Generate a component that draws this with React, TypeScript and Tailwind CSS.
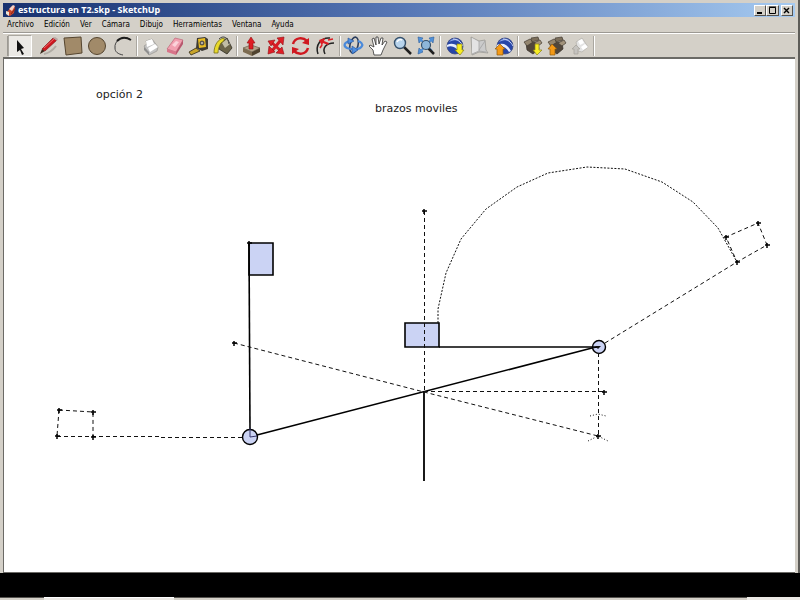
import React from 'react';

interface Tool {
  name: string;
  icon: React.ReactNode;
}

interface ToolGroup {
  id: string;
  spacing: string;
  tools: Tool[];
}

const MENUS = ['Archivo', 'Edición', 'Ver', 'Cámara', 'Dibujo', 'Herramientas', 'Ventana', 'Ayuda'];

const Globe = () => (
  <>
    <circle cx="13" cy="12" r="8" fill="#2746a8" stroke="#3c4a80" strokeWidth="0.8" />
    <path d="M7 8c3-4 8-4 11-1-3-1-7-1-11 1z" fill="#8ea6e8" />
    <path d="M5 11c6-3 11 0 14 6l-2 1c-3-5-7-7-12-5z" fill="#e6edff" />
    <path d="M11 5c4 0 8 3 10 7" fill="none" stroke="#c9d6fa" strokeWidth="1" />
  </>
);

const Crate = () => (
  <>
    <path d="M6 9l12-1 1 7-6 5-6-4z" fill="#51463a" stroke="#332d26" strokeWidth="0.7" />
    <path d="M4 8l6-3 3 3-6 4z" fill="#94866f" stroke="#443b30" strokeWidth="0.7" />
    <path d="M11 4l7-1 1 3-7 2z" fill="#7c6f5b" stroke="#443b30" strokeWidth="0.7" />
    <path d="M14 9l6-3 2 3-4 3z" fill="#a1927a" stroke="#443b30" strokeWidth="0.7" />
  </>
);

const GROUPS: ToolGroup[] = [
  {
    id: 'dibujo',
    spacing: 'gap-px',
    tools: [
      {
        name: 'Línea',
        icon: (
          <>
            <path d="M8 20c5-1 9-4 12-8" fill="none" stroke="#b0aca4" strokeWidth="2" />
            <path d="M4 20l2-5 3 2z" fill="#3a2a1c" />
            <path d="M6 15L17 4l4 2L9 17z" fill="#cf1820" stroke="#7c1014" strokeWidth="0.6" />
            <path d="M8 14L18 5" stroke="#f47a7a" strokeWidth="0.8" />
            <path d="M17 4l2-1 3 2-1 2z" fill="#b9a7a4" />
          </>
        ),
      },
      {
        name: 'Rectángulo',
        icon: <path d="M3 4l17-1 1 16-16 2z" fill="#a18a69" stroke="#55452f" strokeWidth="1" />,
      },
      {
        name: 'Círculo',
        icon: <circle cx="11" cy="12" r="8.5" fill="#a18a69" stroke="#55452f" strokeWidth="1" />,
      },
      {
        name: 'Arco',
        icon: (
          <>
            <path d="M19 5C11 1 3 7 4 14c0 4 3 6 8 7" fill="none" stroke="#444" strokeWidth="1" />
            <path d="M6 7c4-4 9-4 14-1" fill="none" stroke="#1c1c1c" strokeWidth="2" />
          </>
        ),
      },
    ],
  },
  {
    id: 'edicion',
    spacing: 'gap-0',
    tools: [
      {
        name: 'Crear componente',
        icon: (
          <>
            <path d="M5 12l3-2-1-3 6-2 6 8-1 4-8 4z" fill="#c3c3c3" stroke="#98958f" strokeWidth="0.7" />
            <path d="M7 7l6-2 2 5-7 3zM9 14l7-4 3 3-8 5z" fill="#fff" />
            <path d="M5 13l5 5v3l-5-5z" fill="#8e8e8e" />
          </>
        ),
      },
      {
        name: 'Borrar',
        icon: (
          <>
            <path d="M4 15l8-11 8 2-7 12z" fill="#f2a0b0" stroke="#bb6577" strokeWidth="0.7" />
            <path d="M4 15l9 3v3l-9-3z" fill="#d87489" />
            <path d="M13 18l7-12v4l-7 11z" fill="#b9566d" />
            <path d="M9 11l4-4 3 1-4 5z" fill="#fbd3da" />
          </>
        ),
      },
      {
        name: 'Medir',
        icon: (
          <>
            <path d="M2 18l7-4 4 3-9 4z" fill="#c9a52a" stroke="#2e2918" strokeWidth="0.8" />
            <path d="M10 4l8-1 3 2v10l-6 2-6-3z" fill="#3d3a34" />
            <path d="M11 5l7-1 1 9-7 1z" fill="#e9bd21" />
            <circle cx="15" cy="9" r="2.5" fill="#5b564b" />
            <circle cx="15" cy="9" r="1" fill="#cfcabb" />
          </>
        ),
      },
      {
        name: 'Pintar',
        icon: (
          <>
            <path d="M9 9l7-5 5 10-5 6-8-5z" fill="#6b6449" stroke="#2f2c22" strokeWidth="0.8" />
            <path d="M11 9l5-4 3 5-5 4z" fill="#c2bda5" />
            <path d="M3 19c0-8 4-14 10-15 1 2-1 4-3 5-2 3-3 7-3 10z" fill="#e8d92c" stroke="#756d1b" strokeWidth="0.8" />
            <path d="M8 5c4-4 9-2 10 5" fill="none" stroke="#444" />
          </>
        ),
      },
    ],
  },
  {
    id: 'modificar',
    spacing: 'gap-px',
    tools: [
      {
        name: 'Empujar/tirar',
        icon: (
          <>
            <path d="M4 14l8-3 9 3-8 4z" fill="#b3a48b" stroke="#5b4e3a" strokeWidth="0.6" />
            <path d="M4 14l9 4v4l-9-4z" fill="#7c6b50" />
            <path d="M13 18l8-4v4l-8 4z" fill="#4f432f" />
            <path d="M12 3l4 6h-2v6h-4V9H8z" fill="#df1d23" stroke="#8e1014" strokeWidth="0.6" />
          </>
        ),
      },
      {
        name: 'Mover',
        icon: (
          <>
            <path d="M7 8l10 9M16 7l-8 10" stroke="#d51c24" strokeWidth="3" />
            <path d="M13 4l7-1-1 8zM4 7l7-1-4 6zM4 20l1-8 6 6zM20 20l-8-1 6-6z" fill="#e01e26" stroke="#8f1217" strokeWidth="0.6" />
          </>
        ),
      },
      {
        name: 'Rotar',
        icon: (
          <>
            <path d="M4 10c2-7 10-7 14-3" fill="none" stroke="#cf1820" strokeWidth="2.5" />
            <path d="M20 4v7l-7-2z" fill="#cf1820" />
            <path d="M19 14c-2 7-10 7-14 3" fill="none" stroke="#cf1820" strokeWidth="2.5" />
            <path d="M3 20v-7l7 2z" fill="#cf1820" />
          </>
        ),
      },
      {
        name: 'Equidistancia',
        icon: (
          <>
            <path d="M4 20C1 11 7 3 16 4" fill="none" stroke="#222" strokeWidth="1.5" />
            <path d="M11 20c-3-6 1-11 9-11" fill="none" stroke="#222" strokeWidth="1.5" />
            <path d="M5 6l6-2-1 3 5 2-1 2-5-2-1 3z" fill="#dc1c23" />
            <path d="M14 6l5-1M6 14l2-3" stroke="#dc1c23" strokeWidth="1.5" />
          </>
        ),
      },
    ],
  },
  {
    id: 'camara',
    spacing: 'gap-0',
    tools: [
      {
        name: 'Orbitar',
        icon: (
          <>
            <ellipse cx="12" cy="11" rx="4" ry="8" transform="rotate(14 12 11)" fill="none" stroke="#2a3c5c" strokeWidth="1.6" />
            <path d="M8 7c-6 1-7 5-3 7 5 2 13 2 15-2 1-2-1-4-4-5" fill="none" stroke="#4a8adb" strokeWidth="2.2" />
            <path d="M6 4l6 3-6 3zM10 12l6 4-6 4z" fill="#4f8fe0" stroke="#234f95" strokeWidth="0.6" />
          </>
        ),
      },
      {
        name: 'Desplazar',
        icon: (
          <path
            d="M8 21l-1-5-4-4 1-1 4 2-2-8 2-1 2 7V3h2l1 7 2-6h2l-1 7 3-4 2 1-4 8-2 5z"
            fill="#fff"
            stroke="#333"
            strokeWidth="0.8"
          />
        ),
      },
      {
        name: 'Zoom',
        icon: (
          <>
            <path d="M14 13l7 7" stroke="#202020" strokeWidth="2.5" />
            <circle cx="10" cy="9" r="5.5" fill="#b8d4ec" stroke="#35506b" strokeWidth="1.4" />
            <path d="M7 8c1-2 3-3 5-2" stroke="#fff" strokeWidth="1.5" fill="none" />
          </>
        ),
      },
      {
        name: 'Ver modelo centrado',
        icon: (
          <>
            <path d="M4 3l5 1-4 5zM20 3l-5 1 4 5zM4 20l1-6 4 4z" fill="#4f90d9" stroke="#2d5e9c" strokeWidth="0.6" />
            <path d="M6 5l12 12M18 5L6 18" stroke="#4f90d9" strokeWidth="2" />
            <path d="M14 14l6 6" stroke="#202020" strokeWidth="2.5" />
            <circle cx="12" cy="11" r="4.5" fill="#8db6da" stroke="#35506b" strokeWidth="1.2" />
          </>
        ),
      },
    ],
  },
  {
    id: 'google',
    spacing: 'gap-px',
    tools: [
      {
        name: 'Obtener vista actual',
        icon: (
          <>
            <Globe />
            <path d="M15 10h5v6h2l-4 5-5-5h2z" fill="#f8ee24" stroke="#8b831a" strokeWidth="0.7" />
          </>
        ),
      },
      {
        name: 'Activar terreno',
        icon: (
          <>
            <path d="M4 3l8 4 6-1 1 10 2 3-9-1-7 3z" fill="#cbcbcb" stroke="#9c9a96" strokeWidth="0.8" />
            <path d="M5 4l7 4v9l-7 3z" fill="#e3e3e3" />
            <path d="M12 7v10M5 20l7-3 7 1M12 16l6-9" fill="none" stroke="#a3a3a3" strokeWidth="0.8" />
          </>
        ),
      },
      {
        name: 'Colocar modelo',
        icon: (
          <>
            <Globe />
            <path d="M8 10l5 5h-2v6H5v-6H3z" fill="#f49a16" stroke="#8d5910" strokeWidth="0.7" />
          </>
        ),
      },
    ],
  },
  {
    id: 'almacen',
    spacing: 'gap-0',
    tools: [
      {
        name: 'Obtener modelos',
        icon: (
          <>
            <Crate />
            <path d="M15 10h4v6h3l-5 5-4-5h2z" fill="#f8ee24" stroke="#8b831a" strokeWidth="0.7" />
          </>
        ),
      },
      {
        name: 'Compartir modelo',
        icon: (
          <>
            <Crate />
            <path d="M8 10l5 5h-2v6H6v-6H4z" fill="#f49a16" stroke="#8d5910" strokeWidth="0.7" />
          </>
        ),
      },
      {
        name: 'Compartir componente',
        icon: (
          <>
            <path d="M8 8l6-4 6 9-6 5-4-1z" fill="#e3e3e3" stroke="#b2afa9" strokeWidth="0.7" />
            <path d="M10 7l4-2 2 4-4 2zM13 13l4-3 3 3-5 3z" fill="#fff" />
            <path d="M8 11l4 4h-2v5H6v-5H4z" fill="#c6c4c0" stroke="#a3a09a" strokeWidth="0.7" />
          </>
        ),
      },
    ],
  },
];

const ToolButton: React.FC<{ tool: Tool }> = ({ tool }) => (
  <button type="button" aria-label={tool.name} title={tool.name} className="h-6 w-6 shrink-0">
    <svg viewBox="0 0 24 24" className="block h-6 w-6">
      {tool.icon}
    </svg>
  </button>
);

const Divider = () => (
  <div className="flex h-5 w-1 shrink-0 justify-center">
    <div className="w-px bg-[#aaa7a0]"></div>
    <div className="w-px bg-white"></div>
  </div>
);

const TitleBar = () => (
  <header className="flex h-[14px] items-center bg-gradient-to-r from-[#17316f] via-[#5676b5] to-[#a6caf0] pr-0.5 pl-0.5">
    <svg viewBox="0 0 13 13" className="h-[13px] w-[13px] shrink-0">
      <path d="M2 8l5-6 3 1-1 6-4 3-3-1z" fill="#c9462c" />
      <path d="M4 5l4-4 2 1-3 5z" fill="#f6d3c6" />
      <path d="M1 7l3 1v4l-3-2z" fill="#efe3d0" />
      <path d="M6 10l4-5" stroke="#8b2416" />
    </svg>
    <h1 className="flex-1 font-['Noto_Sans',sans-serif] text-[9px] leading-[14px] font-bold whitespace-nowrap text-white">
      estructura en T2.skp - SketchUp
    </h1>
    <div className="flex shrink-0">
      <button type="button" aria-label="Minimizar" className="h-[11px] w-3 border border-t-white border-r-[#55534f] border-b-[#55534f] border-l-white bg-[#d4d0c8]">
        <svg viewBox="0 0 10 9" className="block h-[9px] w-[10px]">
          <path d="M2 7h5" stroke="#000" strokeWidth="2" />
        </svg>
      </button>
      <button type="button" aria-label="Maximizar" className="mr-0.5 h-[11px] w-[13px] border border-t-white border-r-[#55534f] border-b-[#55534f] border-l-white bg-[#d4d0c8]">
        <svg viewBox="0 0 11 9" className="block h-[9px] w-[11px]">
          <path d="M2.500 1.500h6v6h-6zM2 1h7" fill="none" stroke="#000" />
        </svg>
      </button>
      <button type="button" aria-label="Cerrar" className="h-[11px] w-3 border border-t-white border-r-[#55534f] border-b-[#55534f] border-l-white bg-[#d4d0c8]">
        <svg viewBox="0 0 10 9" className="block h-[9px] w-[10px]">
          <path d="M2 2l5 5M7 2L2 7" stroke="#000" strokeWidth="1.4" />
        </svg>
      </button>
    </div>
  </header>
);

const MenuBar = () => (
  <nav className="flex h-4 items-center gap-2.5 border-b border-[#9c9993] pl-1 font-['DejaVu_Sans_Condensed','DejaVu_Sans',sans-serif] text-[8px] leading-4 text-black">
    {MENUS.map((menu) => (
      <button key={menu} type="button" className="whitespace-nowrap">
        {menu}
      </button>
    ))}
  </nav>
);

const Toolbar = () => (
  <div className="flex h-6 items-center border-t border-white pl-1">
    <div className="h-5 w-px shrink-0 bg-[#9c9993]"></div>
    <button type="button" aria-label="Seleccionar" title="Seleccionar" aria-pressed="true" className="mr-1 h-[22px] w-6 shrink-0 border border-t-[#aaa7a0] border-r-white border-b-white border-l-[#aaa7a0] bg-[#ebe9e5]">
      <svg viewBox="0 0 22 20" className="block h-5 w-[22px]">
        <path d="M8 4l7 8-3 1 3 5-2 1-2-5-3 2z" fill="#111" />
      </svg>
    </button>
    {GROUPS.map((group) => (
      <React.Fragment key={group.id}>
        <div className={`flex ${group.spacing}`}>
          {group.tools.map((tool) => (
            <ToolButton key={tool.name} tool={tool} />
          ))}
        </div>
        <Divider />
      </React.Fragment>
    ))}
  </div>
);

// Endpoints of the construction guides
const MARKS = [
  [424, 211], [604, 392], [598, 436], [234, 343], [59, 410], [93, 412], [57, 436], [93, 437],
  [726, 237], [758, 223], [767, 245], [737, 262], [249, 243],
];

const Drawing = () => (
  <svg viewBox="4 59 790 513" preserveAspectRatio="xMinYMin meet" className="block h-full w-full">
    <g fill="#cbd3f4" stroke="#000" strokeWidth="1.6">
      <path d="M249 243h24v32h-24z" />
      <path d="M405 323h34v24h-34z" />
      <circle cx="250" cy="437" r="7.500" strokeWidth="1.4" />
      <circle cx="599" cy="347" r="6.500" strokeWidth="1.4" />
    </g>

    <g fill="none" stroke="#000" strokeWidth="1.6">
      <path d="M249 243l1 187" />
      <path d="M250 428v9l7-1" strokeWidth="1" stroke="#34346a" />
      <path d="M257 435L592 348" />
      <path d="M592 348l7-1" strokeWidth="1" />
      <path d="M439 347h160" />
      <path d="M424 392v89" strokeWidth="1.8" />
    </g>

    <g fill="none" stroke="#111" strokeWidth="1" strokeDasharray="4 3">
      <path d="M424.500 211v181" />
      <path d="M424 391.500h180" />
      <path d="M234 343l190 49 174 44" />
      <path d="M598.500 353v83" />
      <path d="M605 343l132-81 30-17-9-22-32 14 11 25" />
      <path d="M59 410l34 2v25M59 410l-2 26" />
      <path d="M57 436.500h104M161 437.500h82" />
    </g>

    <g fill="none" stroke="#111" strokeWidth="1" strokeDasharray="1 2">
      <path d="M438 323v-14l8-36 15-34 25-30 31-22 31-14 39-6 38 2 37 13 31 20 25 26 19 34" strokeDasharray="2 1.5" />
      <path d="M590 416l8-2 8 2" />
      <path d="M588 441l10-5 10 5" />
    </g>

    {MARKS.map(([x, y]) => (
      <path key={`${x}-${y}`} d={`M${x - 2} ${y}h5M${x} ${y - 2}v5`} stroke="#000" strokeWidth="1.5" />
    ))}
    <path d="M595 346h6l-3 3z" fill="#111" />

    <g fill="#222" className="font-['DejaVu_Sans',sans-serif] text-[11px]">
      <text x="96" y="98">opción 2</text>
      <text x="375" y="112">brazos moviles</text>
    </g>
  </svg>
);

const App: React.FC = () => (
  <div className="flex h-screen flex-col bg-[#d4d0c8]">
    <div className="flex min-h-0 flex-1 flex-col border-r-2 border-[#5d5c58] pt-[3px] pr-[3px] pl-[3px]">
      <TitleBar />
      <MenuBar />
      <Toolbar />
      <main className="min-h-0 flex-1 border-t-2 border-b border-l border-[#6b6a66] bg-white">
        <Drawing />
      </main>
    </div>
    <footer className="shrink-0">
      <div className="h-6 bg-black"></div>
      <div className="flex h-[3px]">
        <div className="w-11 border-t border-[#55534f]"></div>
        <div className="w-[130px] border-t border-white bg-[#eceae6]"></div>
        <div className="flex-1 border-t border-[#55534f]"></div>
        <div className="w-[53px] bg-[#eceae6]"></div>
      </div>
    </footer>
  </div>
);

export default App;
